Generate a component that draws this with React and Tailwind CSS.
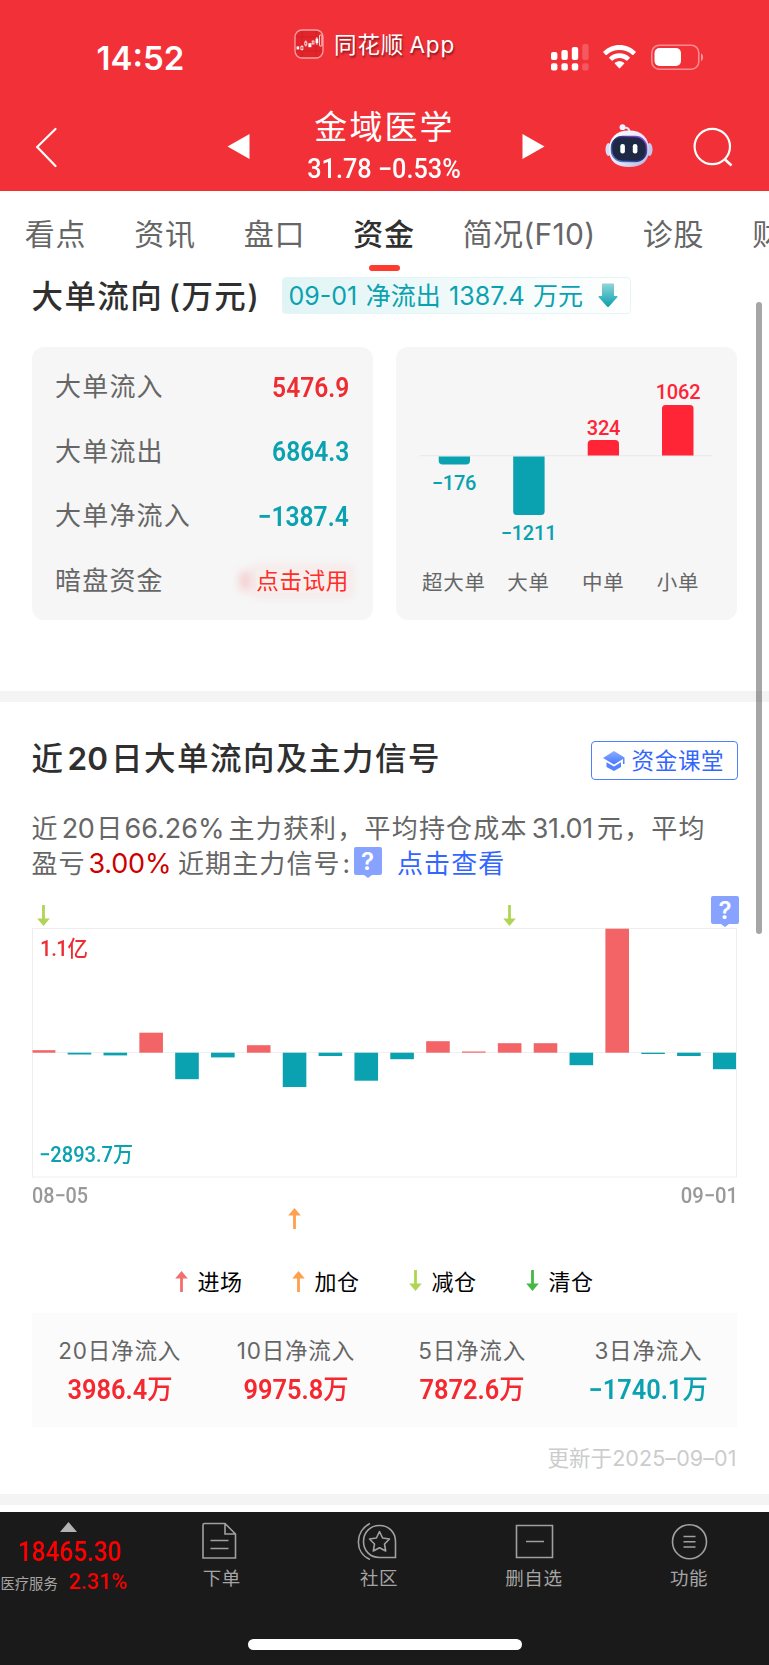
import React from "react";

const UI = "font-['Inter','Noto_Sans_CJK_SC',sans-serif]";
const NUM = "font-['Roboto','Noto_Sans_CJK_SC',sans-serif]";

function StatusBar() {
  return (
    <div className="flex h-[92px] items-start text-white">
      <div className="ml-[96.5px] mt-[37.5px] w-[119.5px] text-[33px] leading-[40px] font-semibold tracking-[0px]">14:52</div>
      <svg className="ml-[78px] mt-[29px] shrink-0" width="30" height="30" viewBox="0 0 30 30" fill="none">
        <rect x="1" y="1" width="28" height="28" rx="7" fill="#e2242b" stroke="#f7a0a3" strokeWidth="1.3" />
        <path d="M2 8H28M2 22H28M8 2V28M22 2V28" stroke="#d21f26" strokeWidth="0.6" />
        <rect x="2.600" y="17.400" width="2.600" height="3" fill="#fff" />
        <path d="M8 16.200V21.500M11.800 11.500V17.500" stroke="#fff" strokeWidth="0.8" />
        <rect x="6.900" y="17.600" width="2" height="2.800" fill="#e2242b" stroke="#fff" strokeWidth="0.8" />
        <rect x="10.800" y="13" width="2" height="3" fill="#e2242b" stroke="#fff" strokeWidth="0.8" />
        <rect x="14.400" y="14.200" width="3" height="4" fill="#fff" />
        <rect x="18.200" y="12" width="1.800" height="3" fill="#e2242b" stroke="#fff" strokeWidth="0.8" />
        <rect x="21.600" y="9.600" width="2.600" height="4.600" fill="#fff" />
        <path d="M22.900 8V16" stroke="#fff" strokeWidth="0.8" />
        <rect x="25.500" y="6" width="2.400" height="11" rx="0.500" stroke="#fff" strokeWidth="0.8" />
      </svg>
      <div className="ml-[10px] mt-[25px] w-[130px] whitespace-nowrap text-[22.5px] leading-[40px] tracking-[0.9px] [word-spacing:-2px] [text-shadow:1px_2px_2px_rgba(0,0,0,0.45)]">同花顺 App</div>
      <svg className="ml-[87px] mt-[44px] shrink-0" width="38" height="27" viewBox="0 0 38 27" fill="#fff">
        <rect x="0" y="8" width="6.4" height="8" rx="2" />
        <rect x="10.4" y="6" width="6.4" height="10" rx="2" />
        <rect x="20.8" y="3" width="6.4" height="13" rx="2" />
        <rect x="31.2" y="0" width="6.4" height="16" rx="2" opacity="0.2" />
        <rect x="0" y="19.3" width="6.4" height="7.2" rx="2" />
        <rect x="10.4" y="19.3" width="6.4" height="7.2" rx="2" />
        <rect x="20.8" y="19.3" width="6.4" height="7.2" rx="2" />
        <rect x="31.2" y="19.3" width="6.4" height="7.2" rx="2" opacity="0.2" />
      </svg>
      <svg className="ml-[14px] mt-[45px] shrink-0" width="33" height="24" viewBox="0 0 33 24" fill="#fff">
        <path d="M16.5 0C10.300 0 4.500 2.500 0.400 6.600Q0 7.100 0.400 7.600L2.700 9.900Q3.200 10.300 3.700 9.900C7 6.700 11.500 4.900 16.500 4.900S26 6.700 29.300 9.900Q29.800 10.300 30.300 9.900L32.600 7.600Q33 7.100 32.600 6.600C28.500 2.500 22.700 0 16.500 0Z" />
        <path d="M16.500 8.200C12.600 8.200 9 9.700 6.300 12.200Q5.800 12.700 6.300 13.200L8.700 15.500Q9.200 15.900 9.700 15.500C11.500 13.900 13.900 12.900 16.500 12.900S21.500 13.900 23.300 15.500Q23.800 15.900 24.300 15.500L26.700 13.200Q27.200 12.700 26.700 12.200C24 9.700 20.400 8.200 16.500 8.200Z" />
        <path d="M16.500 16.200C14.700 16.200 13.100 16.800 11.900 17.800Q11.400 18.300 11.900 18.800L15.900 22.900Q16.500 23.500 17.100 22.900L21.100 18.800Q21.600 18.300 21.100 17.800C19.900 16.800 18.300 16.200 16.500 16.200Z" />
      </svg>
      <svg className="ml-[15px] mt-[44px] shrink-0" width="53" height="26" viewBox="0 0 53 26" fill="none">
        <rect x="0.800" y="1.200" width="47" height="24" rx="7.500" stroke="#fff" strokeOpacity="0.45" strokeWidth="1.500" />
        <rect x="3.500" y="4" width="26.500" height="18" rx="5" fill="#fff" />
        <path d="M50 9.500C52.800 10.600 52.800 15.800 50 17Z" fill="#fff" fillOpacity="0.5" />
      </svg>
    </div>
  );
}

function Robot() {
  return (
    <svg className="shrink-0" width="48" height="44" viewBox="0 0 48 44">
      <defs>
        <linearGradient id="shell" x1="0" y1="0" x2="1" y2="1">
          <stop offset="0" stopColor="#ffffff" />
          <stop offset="0.6" stopColor="#e3e3f6" />
          <stop offset="1" stopColor="#a9aee0" />
        </linearGradient>
        <linearGradient id="rim" x1="0" y1="1" x2="1" y2="0">
          <stop offset="0" stopColor="#5f8df0" />
          <stop offset="0.5" stopColor="#1b2a6e" />
          <stop offset="1" stopColor="#a650f0" />
        </linearGradient>
      </defs>
      <path d="M17 3.500C22 3 24.500 4 24.500 8" stroke="#e4e6fa" strokeWidth="2" fill="none" />
      <circle cx="17.500" cy="3.200" r="2.900" fill="#f3f4ff" />
      <ellipse cx="3.500" cy="25.500" rx="3" ry="6.500" fill="#d9dcf5" />
      <ellipse cx="44.500" cy="25.500" rx="3" ry="6.500" fill="#c3c8ee" />
      <path d="M24 6.500C37 6.500 44 14 44 25.500C44 38 36 43 24 43S4 38 4 25.500C4 14 11 6.500 24 6.500Z" fill="url(#shell)" />
      <rect x="6.500" y="12.500" width="35" height="25" rx="11" fill="#1e2743" stroke="url(#rim)" strokeWidth="1.500" />
      <rect x="15.300" y="20" width="4.600" height="9.500" rx="2.200" fill="#fff" />
      <rect x="27.800" y="20" width="4.600" height="9.500" rx="2.200" fill="#fff" />
    </svg>
  );
}

function TitleBar() {
  return (
    <div className="flex h-[99px] items-start text-white">
      <svg className="ml-[35px] mt-[35px] shrink-0" width="23" height="41" viewBox="0 0 23 41" fill="none">
        <path d="M20.500 2L2.200 20L20.500 39" stroke="#fff" strokeWidth="2.200" strokeLinecap="round" />
      </svg>
      <svg className="ml-[169px] mt-[42px] shrink-0" width="23" height="25" viewBox="0 0 23 25">
        <path d="M0.500 12.500L22.500 0V25Z" fill="#fff" />
      </svg>
      <div className="ml-[34px] w-[200px] shrink-0 text-center">
        <div className="mt-[14px] pl-[1px] text-[33px] leading-[42px] tracking-[2.1px]">金域医学</div>
        <div className={`${NUM} h-[40px] origin-center scale-x-[0.935] whitespace-nowrap text-[27px] leading-[43px] font-medium`}>31.78 −0.53%</div>
      </div>
      <svg className="ml-[38px] mt-[42px] shrink-0" width="23" height="25" viewBox="0 0 23 25">
        <path d="M22.500 12.500L0.500 0V25Z" fill="#fff" />
      </svg>
      <div className="ml-[60px] mt-[32px]"><Robot /></div>
      <svg className="ml-[39.5px] mt-[34px] shrink-0" width="41" height="41" viewBox="0 0 41 41" fill="none" stroke="#fff" strokeWidth="2.200">
        <circle cx="19.300" cy="20.500" r="17.700" />
        <path d="M31.500 33L38.500 39.500" strokeWidth="2.500" />
      </svg>
    </div>
  );
}

function Tabs() {
  return (
    <nav className="flex h-[86px] gap-[47.5px] overflow-hidden pl-[24.700px] pt-[23px] text-[30px] leading-[40px] tracking-[0.8px] whitespace-nowrap text-[#666]">
      <span className="w-[62px] shrink-0">看点</span>
      <span className="w-[62px] shrink-0">资讯</span>
      <span className="w-[62px] shrink-0">盘口</span>
      <span className="w-[62px] shrink-0 font-medium text-[#303030]">
        资金
        <i className="mx-auto mt-[11px] block h-[6px] w-[31px] rounded-full bg-[#ff3b30]" />
      </span>
      <span className="w-[132.5px] shrink-0 tracking-[0.3px]">简况(F10)</span>
      <span className="w-[62px] shrink-0">诊股</span>
      <span className="w-[62px] shrink-0">财务</span>
    </nav>
  );
}

function FlowRow({ label, value, color }) {
  return (
    <div className="flex h-[64.5px] items-center justify-between pl-[23.5px] pr-[23.5px]">
      <span className="text-[26px] leading-[40px] tracking-[1.2px] text-[#666]">{label}</span>
      <span className={`${NUM} ${color} origin-right scale-x-[0.895] text-[27.500px] leading-[39px] font-semibold`}>{value}</span>
    </div>
  );
}

const TEAL = "#0aa2b0";
const CRIMSON = "#ff2436";

function OrderBars() {
  return (
    <svg width="298" height="180" viewBox="0 0 298 180" className={`${NUM} tracking-[-0.2px]`} fontSize="20" fontWeight="500" textAnchor="middle">
      <path d="M3 75.700H295" stroke="#ebebeb" strokeWidth="1.200" />
      <path d="M21.700 76.500H53V80.500Q53 84.500 49 84.500H25.700Q21.700 84.500 21.700 80.500Z" fill={TEAL} />
      <path d="M96.200 76.500H127.600V131.500Q127.600 135 124 135H99.700Q96.200 135 96.200 131.500Z" fill={TEAL} />
      <path d="M170.700 75.500V64Q170.700 60 174.700 60H198Q202 60 202 64V75.500Z" fill={CRIMSON} />
      <path d="M245 75.500V28.500Q245 25 248.500 25H273Q276.500 25 276.500 28.500V75.500Z" fill={CRIMSON} />
      <text x="37" y="110" fill={TEAL}>−176</text>
      <text x="111.500" y="160" fill={TEAL}>−1211</text>
      <text x="186.500" y="54.500" fill={CRIMSON}>324</text>
      <text x="261" y="18.500" fill={CRIMSON}>1062</text>
    </svg>
  );
}

function LargeOrders() {
  return (
    <section className="px-[31.5px]">
      <div className="flex h-[37px] items-center">
        <h2 className="w-[250px] whitespace-nowrap text-[31.500px] leading-[37px] pt-[2px] font-medium tracking-[1.400px] [word-spacing:-4.500px] text-[#2f2f2f]">大单流向 (万元)</h2>
        <div className="flex h-[37px] w-[349px] items-center rounded-[4px] border border-[#e3f6f7] bg-linear-to-r from-[#e1f4f5] to-white pl-[6px] text-[25px] whitespace-nowrap text-[#0aa2b0]">
          <span className="w-[309px] leading-[36px] [word-spacing:1.400px]">09-01 净流出 1387.4 万元</span>
          <svg width="20" height="25" viewBox="0 0 20 25">
            <defs>
              <linearGradient id="down" x1="0" y1="0" x2="0" y2="1">
                <stop offset="0" stopColor="#8fd5da" />
                <stop offset="1" stopColor="#0aa0ae" />
              </linearGradient>
            </defs>
            <path d="M5 0.500H15Q16 0.500 16 1.500V13H19Q20 13.200 19.300 14.200L11 23.500Q10 24.500 9 23.500L0.700 14.200Q0 13.200 1 13H4V1.500Q4 0.500 5 0.500Z" fill="url(#down)" />
          </svg>
        </div>
      </div>
      <div className="mt-[33px] flex gap-[23px]">
        <div className="h-[273px] w-[341px] rounded-[12px] bg-[#f6f6f6] pt-[8px]">
          <FlowRow label="大单流入" value="5476.9" color="text-[#ee2d33]" />
          <FlowRow label="大单流出" value="6864.3" color="text-[#0aa2b0]" />
          <FlowRow label="大单净流入" value="−1387.4" color="text-[#0aa2b0]" />
          <div className="flex h-[64.5px] items-center justify-between pl-[23.5px] pr-[23.5px]">
            <span className="text-[26px] leading-[40px] tracking-[1.2px] text-[#666]">暗盘资金</span>
            <span className="flex items-center">
              <i className="h-[20px] w-[10px] rounded-full bg-[#f5a3a3]/50 blur-[4px]" />
              <span className="ml-[6px] bg-[#ff3b30]/4 text-[22.500px] leading-[24px] tracking-[0.7px] text-[#ff2d26] shadow-[0_0_8px_5px_rgba(255,59,48,0.06)]">点击试用</span>
            </span>
          </div>
        </div>
        <div className="h-[273px] w-[341px] rounded-[12px] bg-[#f6f6f6] pt-[33px]">
          <div className="mx-auto w-[298px]"><OrderBars /></div>
          <div className="mx-auto mt-[9px] grid w-[299px] grid-cols-4 text-center text-[20.500px] leading-[28px] tracking-[0.8px] whitespace-nowrap text-[#666]">
            <span>超大单</span><span>大单</span><span>中单</span><span>小单</span>
          </div>
        </div>
      </div>
    </section>
  );
}

function Help() {
  return (
    <svg width="28" height="31" viewBox="0 0 28 31" className="shrink-0 font-['Inter',sans-serif]">
      <path d="M2 0H26Q28 0 28 2V26Q28 28 26 28H18L14 31L10 28H2Q0 28 0 26V2Q0 0 2 0Z" fill="#87a3ff" />
      <text x="14" y="23" textAnchor="middle" fontSize="24" fontWeight="600" fill="#fff">?</text>
    </svg>
  );
}

function Arrow({ color, up }) {
  return (
    <svg width="13" height="22" viewBox="0 0 13 22" className={up ? "rotate-180" : ""}>
      <path d="M5.100 0H7.900V13.500H12.800L6.500 21L0.200 13.500H5.100Z" fill={color} />
    </svg>
  );
}

const DAYS = [2.5, -1.8, -2.7, 20, -26.5, -4.700, 7.5, -34.300, -3.300, -28, -6.500, 11.500, 1.200, 9.500, 9.500, -12.500, 124, -1.300, -3.300, -16.500];

function SignalChart() {
  return (
    <div className="relative mt-[14px] h-[334px]">
      <div className="absolute left-[5px] top-[9px]"><Arrow color="#b0d555" /></div>
      <div className="absolute left-[471.5px] top-[9px]"><Arrow color="#b0d555" /></div>
      <svg className="block pt-[32px]" width="705" height="282" viewBox="0 0 705 250">
        <rect x="0.500" y="0.500" width="704" height="248.500" fill="none" stroke="#eeeeee" />
        <path d="M1 124.500H704" stroke="#f0f0f0" />
        {DAYS.map((v, i) => {
          const x = Math.max(0.500, -0.200 + 35.850 * i);
          const right = Math.min(704, 23.400 + 35.850 * i);
          return <rect key={i} x={x} y={v > 0 ? 124.700 - v : 124.700} width={right - x} height={Math.abs(v)} fill={v > 0 ? "#f26466" : TEAL} />;
        })}
      </svg>
      <div className="absolute left-[679.5px] top-0"><Help /></div>
      <div className={`${NUM} absolute left-[8px] top-[39px] origin-left scale-x-[0.95] text-[21.500px] leading-[28px] font-medium tracking-[-0.500px] text-[#ee2d33]`}>1.1亿</div>
      <div className={`${NUM} absolute left-[7.500px] top-[244.500px] origin-left scale-x-[0.935] text-[21.500px] leading-[28px] font-medium text-[#0aa2b0]`}>−2893.7万</div>
      <div className={`${NUM} flex justify-between text-[21.500px] leading-[36px] font-medium text-[#999]`}>
        <span className="origin-left scale-x-[0.92]">08−05</span><span className="origin-right scale-x-[0.94]">09−01</span>
      </div>
      <div className="absolute left-[256.5px] top-[311px]"><Arrow up color="#ffa04f" /></div>
    </div>
  );
}

function Stat({ label, value, color }) {
  return (
    <div className="text-center">
      <div className="text-[22.500px] leading-[32px] tracking-[0.800px] text-[#666]">{label}</div>
      <div className={`${NUM} ${color} mt-[6px] origin-center scale-x-[0.94] text-[27px] leading-[34px] font-semibold`}>{value}<span className="font-medium">万</span></div>
    </div>
  );
}

function Signals() {
  return (
    <section className="px-[31.5px]">
      <div className="mt-[39px] flex h-[39px] justify-between">
        <h2 className="whitespace-nowrap text-[31.500px] leading-[36px] font-medium tracking-[1.500px] text-[#2f2f2f]">近<span className="mx-[3px] font-semibold tracking-[0px]">20</span>日大单流向及主力信号</h2>
        <button className="flex h-[39px] w-[147px] items-center rounded-[4px] border border-[#4d7fff] pl-[11px] text-[22.500px] leading-[36px] tracking-[0.700px] whitespace-nowrap text-[#3366ff]">
          <svg className="mr-[7px] shrink-0" width="22" height="20" viewBox="0 0 22 20">
            <defs>
              <linearGradient id="cap" x1="0" y1="0" x2="0" y2="1">
                <stop offset="0" stopColor="#8fadff" />
                <stop offset="1" stopColor="#4478ff" />
              </linearGradient>
            </defs>
            <path d="M11 0L21.500 6.500V13H20V8L11 13.500L0 7Z" fill="url(#cap)" />
            <path d="M3.500 11.200L11 15.500L18 11.200V16L11 20L3.500 16Z" fill="#5583ff" />
          </svg>
          资金课堂
        </button>
      </div>
      <div className="mt-[30px] text-[26px] leading-[36px] whitespace-nowrap text-[#666]">
        <div className="h-[36px] pt-[0.5px] tracking-[1.200px]">
          近<span className="ml-[3px] mr-[2px] text-[27px] tracking-[-0.500px]">20</span>日<span className="ml-[1px] mr-[4px] text-[27px] tracking-[0px]">66.26%</span>主力获利，平均持仓成本<span className="ml-[4px] mr-[4px] text-[27px] tracking-[-0.300px]">31.01</span>元，平均
        </div>
        <div className="flex h-[36px] tracking-[1.100px]">
          <span className="w-[57px]">盈亏</span>
          <span className="w-[89.5px] text-[27px] tracking-[-0.200px] text-[#cc0000]">3.00%</span>
          <span className="w-[175.5px]">近期主力信号<span className="ml-[2px]">:</span></span>
          <span className="mt-[1px]"><Help /></span>
          <a className="ml-[15.5px] text-[#3366ff]">点击查看</a>
        </div>
      </div>
      <SignalChart />
      <div className="ml-[143px] flex h-[104px] w-[468px] items-center text-[22px] leading-[30px] tracking-[0.500px] text-black">
        <span className="flex w-[117.200px] gap-[10px]"><i className="mt-[3px]"><Arrow up color="#f07070" /></i>进场</span>
        <span className="flex w-[117.200px] gap-[10px]"><i className="mt-[3px]"><Arrow up color="#ffa04f" /></i>加仓</span>
        <span className="flex w-[117.200px] gap-[10px]"><i className="mt-[3px]"><Arrow color="#b0d555" /></i>减仓</span>
        <span className="flex w-[117.200px] gap-[10px]"><i className="mt-[3px]"><Arrow color="#45b845" /></i>清仓</span>
      </div>
      <div className="mt-[-21px] grid h-[114px] w-[705px] grid-cols-4 bg-[#fbfbfb] pt-[22px]">
        <Stat label="20日净流入" value="3986.4" color="text-[#f5272f]" />
        <Stat label="10日净流入" value="9975.8" color="text-[#f5272f]" />
        <Stat label="5日净流入" value="7872.6" color="text-[#f5272f]" />
        <Stat label="3日净流入" value="−1740.1" color="text-[#0aa2b0]" />
      </div>
      <div className="h-[67px] pt-[16px] pr-[1px] text-right text-[21.500px] leading-[30px] tracking-[0.080px] text-[#ccc]">更新于2025–09–01</div>
    </section>
  );
}

function NavItem({ label, children, shift }) {
  return (
    <div className="flex flex-1 flex-col items-center text-[18.500px] leading-[26px] tracking-[0.600px] text-[#a5a5a5]">
      <svg className="mt-[10px]" width="40" height="39" viewBox="0 0 40 39" fill="none" stroke="#a0a0a0" strokeWidth="1.600">{children}</svg>
      <span className={`mt-[4px] ${shift || ""}`}>{label}</span>
    </div>
  );
}

function BottomBar() {
  return (
    <footer className="h-[153px] bg-[#1a1a1a]">
      <div className="flex h-[127px]">
        <div className={`${NUM} w-[142px] shrink-0 font-medium text-[#ff0000]`}>
          <svg className="ml-[60px] mt-[10px]" width="17" height="10" viewBox="0 0 17 10"><path d="M8.500 0L17 10H0Z" fill="#b3b3b3" /></svg>
          <div className="ml-[18px] mt-[2px] origin-left scale-x-[0.87] text-[28px] leading-[36px]">18465.30</div>
          <div className="mt-[-3px] flex items-center whitespace-nowrap leading-[24px]">
            <span className={`${UI} w-[69px] pl-[0.5px] pt-[5px] text-[14.300px] font-normal text-[#a5a5a5]`}>医疗服务</span>
            <span className="mt-[-2px] origin-left scale-x-[0.96] text-[22.500px]">2.31%</span>
          </div>
        </div>
        <div className="flex w-[627px]">
          <NavItem label="下单" shift="pl-[3px]">
            <path d="M4.500 1.500H25L35.500 12V36H3V3Q3 1.500 4.500 1.500ZM25 1.500V12H35.500M10.500 18.500H28.500M10.500 26.500H28.500" />
          </NavItem>
          <NavItem label="社区" shift="pl-[4px]">
            <path d="M13 1.500C-2.500 9 -2.500 31 13 37.500M22.500 3.500C13 3.500 6.500 10.500 6.500 19.500S13 35.500 22.500 35.500H38.500V19.500C38.500 10.500 32 3.500 22.500 3.500Z" />
            <path d="M22.500 9.500L25.600 16L32.500 17L27.500 22L28.700 29L22.500 25.700L16.300 29L17.500 22L12.500 17L19.400 16Z" strokeLinejoin="round" />
          </NavItem>
          <NavItem label="删自选">
            <path d="M2.500 3.500H38.500V35.500H2.500ZM12 19.500H30" />
          </NavItem>
          <NavItem label="功能" shift="pr-[3px]">
            <circle cx="18.500" cy="19.700" r="17" />
            <path d="M12.500 14.500H24.500M12.500 19.700H24.500M12.500 25H24.500" />
          </NavItem>
        </div>
      </div>
      <div className="mx-auto h-[10.500px] w-[274px] rounded-full bg-white" />
    </footer>
  );
}

export default function App() {
  return (
    <div className={`${UI} relative h-[1665px] w-[769px] overflow-hidden bg-white`}>
      <header className="h-[191px] bg-[#f23038]">
        <StatusBar />
        <TitleBar />
      </header>
      <Tabs />
      <LargeOrders />
      <div className="mt-[71px] h-[11px] bg-[#f4f4f4]" />
      <Signals />
      <div className="mb-[7px] h-[11px] bg-[#f4f4f4]" />
      <BottomBar />
      <div className="absolute left-[756px] top-[302px] h-[632px] w-[6px] rounded-full bg-black/35" />
    </div>
  );
}
